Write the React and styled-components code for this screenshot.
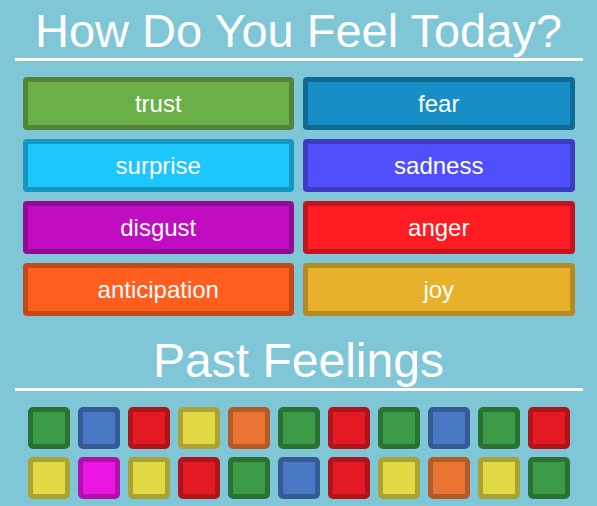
import React from 'react';
import styled, { createGlobalStyle } from 'styled-components';

const emotions = {
    trust: { bg: '#6aaf48', border: '#528536' },
    fear: { bg: '#178fc6', border: '#106a94' },
    surprise: { bg: '#1dc6fc', border: '#1597c2' },
    sadness: { bg: '#4f50fb', border: '#3d3cc0' },
    disgust: { bg: '#c10dc1', border: '#930b94' },
    anger: { bg: '#ff1b22', border: '#c1141b' },
    anticipation: { bg: '#ff5e1f', border: '#c34919' },
    joy: { bg: '#e7b12b', border: '#b38a23' },
};

const pastColors = {
    green: { bg: '#3b9a46', border: '#2a7133' },
    blue: { bg: '#4878c3', border: '#355a94' },
    red: { bg: '#e31a23', border: '#ad141b' },
    yellow: { bg: '#e1da45', border: '#aaa333' },
    orange: { bg: '#e97431', border: '#b45a26' },
    magenta: { bg: '#ea17e2', border: '#b011ac' },
};

const past = [
    'green', 'blue', 'red', 'yellow', 'orange', 'green', 'red', 'green', 'blue', 'green', 'red',
    'yellow', 'magenta', 'yellow', 'red', 'green', 'blue', 'red', 'yellow', 'orange', 'yellow', 'green',
];

function App() {
    return (
        <Page>
            <GlobalStyle />
            <Title $size={47}>How Do You Feel Today?</Title>
            <ButtonGrid>
                {Object.keys(emotions).map((name) => (
                    <FeelingButton key={name} $bg={emotions[name].bg} $border={emotions[name].border}>
                        {name}
                    </FeelingButton>
                ))}
            </ButtonGrid>

            <Title $top={18}>Past Feelings</Title>
            <History>
                {past.map((c, i) => (
                    <Swatch key={i} $bg={pastColors[c].bg} $border={pastColors[c].border} />
                ))}
            </History>
        </Page>
    );
}

const GlobalStyle = createGlobalStyle`
    html, body {
        margin: 0;
        padding: 0;
        background: #7fc6d6;
    }
`;

const Page = styled.div`
    width: 597px;
    min-height: 506px;
    padding-top: 4px;
    box-sizing: border-box;
    font-family: "Liberation Sans", Arial, sans-serif;
    color: white;
`;

const Title = styled.h1`
    width: 568px;
    margin: ${(p) => p.$top || 0}px auto 0;
    font-size: ${(p) => p.$size || 48}px;
    font-weight: normal;
    line-height: 54px;
    text-align: center;
    border-bottom: 3px solid white;
`;

const ButtonGrid = styled.div`
    width: 552px;
    margin: 16px auto 0;
    display: grid;
    grid-template-columns: 1fr 1fr;
    gap: 9px;
`;

const FeelingButton = styled.button`
    height: 53px;
    box-sizing: border-box;
    background: ${(p) => p.$bg};
    border: 5px solid ${(p) => p.$border};
    border-radius: 4px;
    color: white;
    font-family: "Liberation Sans", Arial, sans-serif;
    font-size: 24px;
    cursor: pointer;
    padding: 0;
`;

const History = styled.div`
    width: 568px;
    margin: 16px auto 0;
    display: flex;
    flex-wrap: wrap;
    justify-content: center;
    gap: 8px;
`;

const Swatch = styled.div`
    width: 42px;
    height: 42px;
    box-sizing: border-box;
    background: ${(p) => p.$bg};
    border: 5px solid ${(p) => p.$border};
    border-radius: 5px;
`;

export default App;
